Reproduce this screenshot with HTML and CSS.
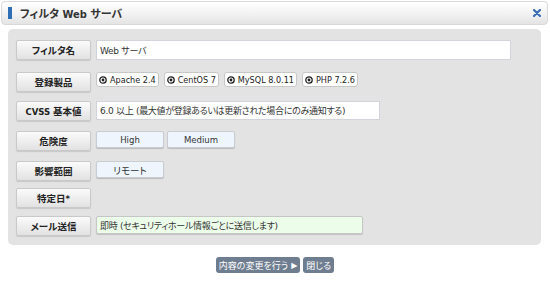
FILE: index.html
```html
<!DOCTYPE html>
<html lang="ja">
<head>
<meta charset="utf-8">
<title>フィルタ Web サーバ</title>
<link rel="stylesheet" href="styles.css">
</head>
<body>
<div class="dialog">
  <header class="head">
    <span class="head-bar"></span>
    <span class="head-title">フィルタ Web サーバ</span>
    <svg class="head-close" width="8" height="8" viewBox="0 0 8 8"><path d="M1 1L7 7M7 1L1 7" stroke="#3b6cb8" stroke-width="2.2" stroke-linecap="round"/></svg>
  </header>
  <section class="panel">
    <div class="label">フィルタ名</div>
    <div class="cell"><div class="field field-wide">Web サーバ</div></div>

    <div class="label">登録製品</div>
    <div class="cell chips">
      <span class="chip"><svg class="chip-ico" width="8" height="8" viewBox="0 0 8 8"><circle cx="4" cy="4" r="3.2" fill="none" stroke="#222" stroke-width="1.3"/><circle cx="4" cy="4" r="1.4" fill="#222"/></svg>Apache 2.4</span>
      <span class="chip"><svg class="chip-ico" width="8" height="8" viewBox="0 0 8 8"><circle cx="4" cy="4" r="3.2" fill="none" stroke="#222" stroke-width="1.3"/><circle cx="4" cy="4" r="1.4" fill="#222"/></svg>CentOS 7</span>
      <span class="chip"><svg class="chip-ico" width="8" height="8" viewBox="0 0 8 8"><circle cx="4" cy="4" r="3.2" fill="none" stroke="#222" stroke-width="1.3"/><circle cx="4" cy="4" r="1.4" fill="#222"/></svg>MySQL 8.0.11</span>
      <span class="chip"><svg class="chip-ico" width="8" height="8" viewBox="0 0 8 8"><circle cx="4" cy="4" r="3.2" fill="none" stroke="#222" stroke-width="1.3"/><circle cx="4" cy="4" r="1.4" fill="#222"/></svg>PHP 7.2.6</span>
    </div>

    <div class="label">CVSS 基本値</div>
    <div class="cell"><div class="field field-mid">6.0 以上 (最大値が登録あるいは更新された場合にのみ通知する)</div></div>

    <div class="label">危険度</div>
    <div class="cell opts"><span class="opt">High</span><span class="opt">Medium</span></div>

    <div class="label">影響範囲</div>
    <div class="cell opts"><span class="opt">リモート</span></div>

    <div class="label">特定日*</div>
    <div class="cell"></div>

    <div class="label">メール送信</div>
    <div class="cell"><div class="field field-green">即時 (セキュリティホール情報ごとに送信します)</div></div>
  </section>
  <footer class="actions">
    <span class="btn">内容の変更を行う <span class="tri">▶</span></span>
    <span class="btn">閉じる</span>
  </footer>
</div>
</body>
</html>
```
FILE: styles.css
```css
html, body {
  margin: 0;
  padding: 0;
  background: #fff;
}
body {
  padding: 1px;
  font-family: "DejaVu Sans Condensed", "DejaVu Sans", "Noto Sans CJK JP", sans-serif;
  font-size: 10px;
  color: #333;
  font-feature-settings: "palt";
}
.dialog {
  width: 548px;
}
.head {
  box-sizing: border-box;
  height: 24px;
  width: 547px;
  border: 1px solid #d9d9d9;
  border-radius: 4px;
  background: linear-gradient(#ffffff, #f3f3f3 50%, #e4e4e4);
  display: flex;
  align-items: center;
  padding-left: 6px;
  padding-right: 6px;
}
.head-bar {
  width: 4px;
  height: 12px;
  background: #2e6eb5;
  margin-right: 8px;
}
.head-title {
  font-weight: bold;
  font-size: 11px;
  color: #333;
  flex: 1;
}
.head-close {
  display: block;
}
.panel {
  margin: 4px 0 0 7px;
  width: 533px;
  box-sizing: border-box;
  background: #e3e3e3;
  border-radius: 5px;
  padding: 11px 8px 9px 8px;
  display: grid;
  grid-template-columns: 75px 1fr;
  grid-template-rows: 32px 29px 30px 30px 27px 28px 20px;
  column-gap: 5px;
  align-items: start;
}
.label {
  box-sizing: border-box;
  height: 20px;
  border: 1px solid #c9c9c9;
  border-radius: 2px;
  background: linear-gradient(#fbfbfb, #ececec 60%, #e2e2e2);
  box-shadow: 0 1px 1px rgba(0,0,0,0.12);
  display: flex;
  align-items: center;
  justify-content: center;
  font-weight: bold;
  font-size: 9.5px;
  color: #222;
}
.cell {
  display: flex;
  align-items: flex-start;
}
.field {
  box-sizing: border-box;
  height: 20px;
  background: #fff;
  border: 1px solid #d3d3db;
  display: flex;
  align-items: center;
  padding-left: 3px;
  color: #333;
  white-space: nowrap;
  font-family: "DejaVu Sans", "Noto Sans CJK JP", sans-serif;
  font-size: 9px;
  letter-spacing: -0.3px;
}
.field-wide { width: 415px; }
.field-mid { width: 284px; height: 19px; }
.field-green {
  width: 267px;
  height: 18px;
  background: #ecfdea;
  border-color: #c6c6c6;
  border-radius: 2px;
  box-shadow: 0 1px 1px rgba(0,0,0,0.15);
}
.chips {
  gap: 5px;
}
.chip {
  box-sizing: border-box;
  height: 15px;
  display: inline-flex;
  align-items: center;
  background: #fff;
  border: 1px solid #c7c7c7;
  border-radius: 3px;
  padding: 0 2px 0 2px;
  color: #222;
  white-space: nowrap;
  font-size: 9px;
}
.chip-ico {
  margin-right: 3px;
  display: block;
}
.opts {
  gap: 3px;
}
.opt {
  box-sizing: border-box;
  width: 68px;
  height: 17px;
  display: inline-flex;
  align-items: center;
  justify-content: center;
  background: #eef5fd;
  border: 1px solid #c9cdd2;
  border-radius: 2px;
  box-shadow: 0 1px 1px rgba(0,0,0,0.18);
  color: #333;
  font-size: 9.5px;
}
.actions {
  margin-top: 12px;
  display: flex;
  justify-content: center;
  gap: 3px;
  width: 548px;
}
.btn {
  box-sizing: border-box;
  height: 16px;
  display: inline-flex;
  align-items: center;
  padding: 0 3px;
  background: #6e7d8f;
  color: #fff;
  border-radius: 3px;
  white-space: nowrap;
  font-size: 9px;
}
.tri {
  font-family: "DejaVu Sans", sans-serif;
  font-size: 8px;
  margin-left: 3px;
}
```
